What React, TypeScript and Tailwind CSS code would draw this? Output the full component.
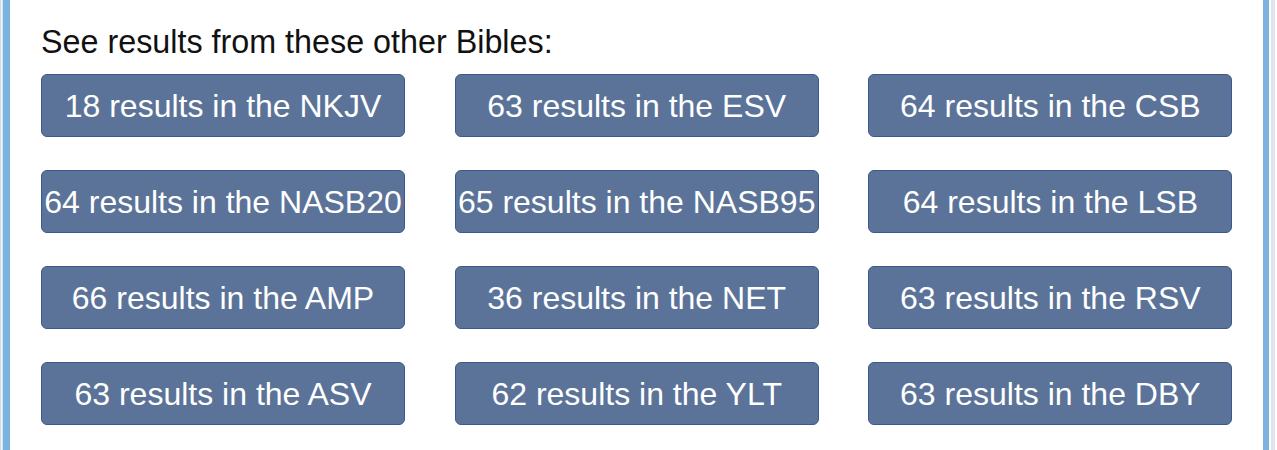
export default function App() {
  const bibles = [
    ["18", "NKJV"],
    ["63", "ESV"],
    ["64", "CSB"],
    ["64", "NASB20"],
    ["65", "NASB95"],
    ["64", "LSB"],
    ["66", "AMP"],
    ["36", "NET"],
    ["63", "RSV"],
    ["63", "ASV"],
    ["62", "YLT"],
    ["63", "DBY"],
  ];

  return (
    <div
      className="flex h-[450px] w-[1277px] bg-white overflow-hidden"
      style={{ fontFamily: '"Liberation Sans", Arial, sans-serif' }}
    >
      {/* left frame */}
      <div className="w-[1px] bg-[#cfdcea]" />
      <div className="w-[1px] bg-[#eef3f8]" />
      <div className="w-[1px] bg-[#d6e2ee]" />
      <div className="w-[7px] bg-[#7cb3de]" />

      <main className="flex-1 pl-[31px] pr-[30px] pt-[24px]">
        <h2 className="text-[32.3px] leading-[36px] text-[#111] whitespace-nowrap">
          See results from these other Bibles:
        </h2>
        <div className="mt-[14px] grid grid-cols-3 gap-x-[49px] gap-y-[33px] w-[1192px]">
          {bibles.map(([n, v]) => (
            <button
              key={v}
              className="h-[63px] w-[364px] rounded-[6px] border-[1.5px] border-[#3a5a8c] bg-[#5b7398] text-white text-[32px] leading-none whitespace-nowrap flex items-center justify-center"
            >
              {n} results in the {v}
            </button>
          ))}
        </div>
      </main>

      {/* right frame */}
      <div className="w-[6px] bg-[#7cb3de]" />
      <div className="w-[2px] bg-white" />
      <div className="w-[4px] bg-[#dfe5ee]" />
      <div className="w-[2px] bg-white" />
    </div>
  );
}
